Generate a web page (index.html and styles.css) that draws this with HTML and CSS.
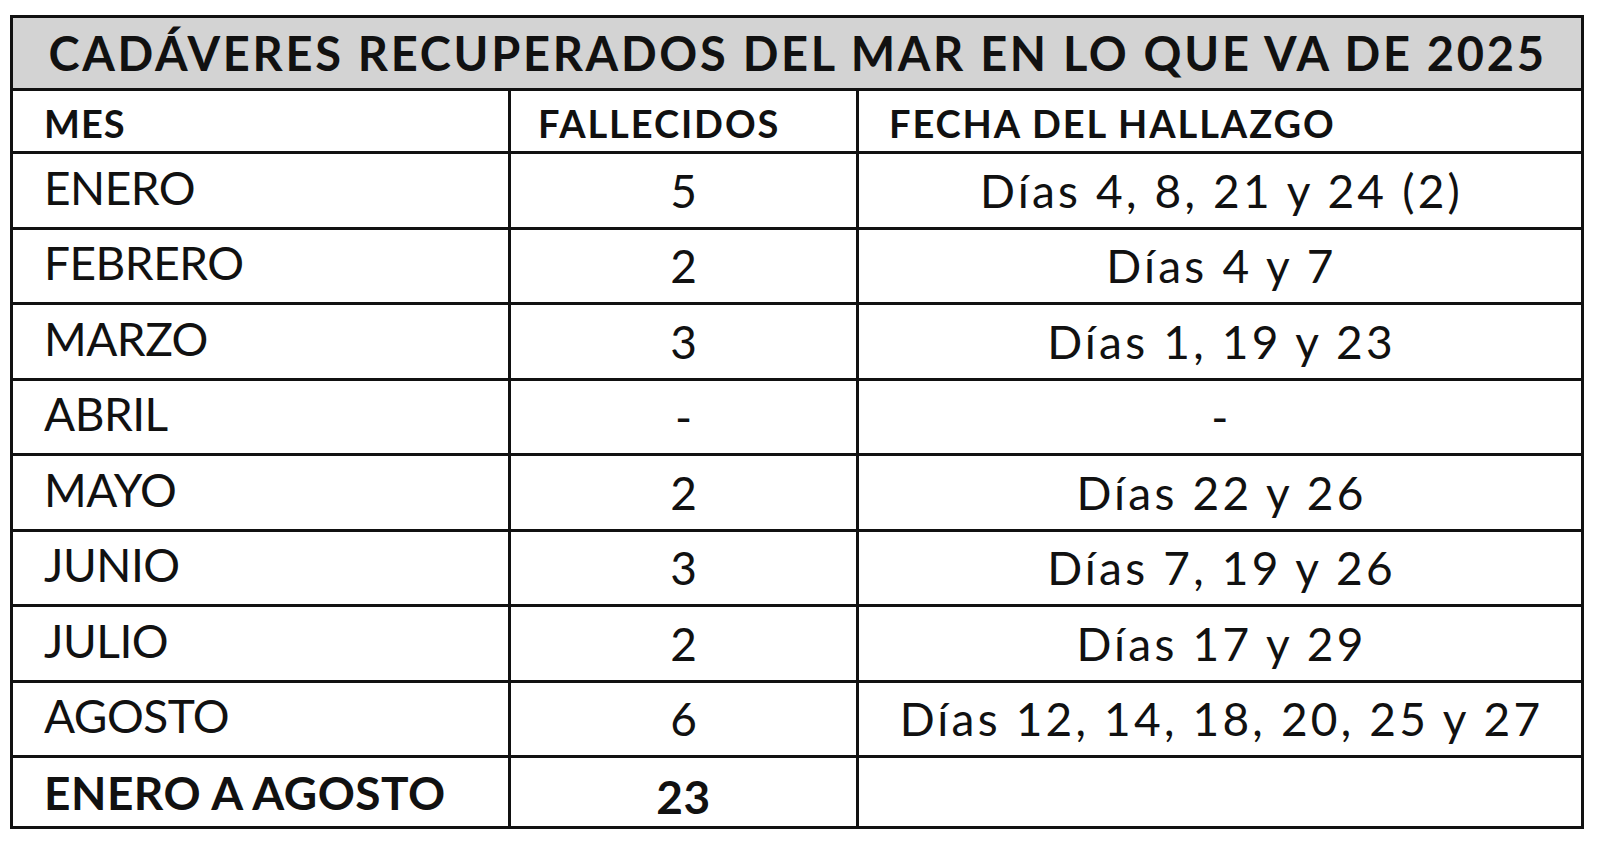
FILE: index.html
```html
<!DOCTYPE html>
<html lang="es">
<head>
<meta charset="utf-8">
<title>Cadáveres recuperados del mar en lo que va de 2025</title>
<link rel="stylesheet" href="styles.css">
</head>
<body>
<table class="sheet">
  <colgroup>
    <col class="c-mes">
    <col class="c-num">
    <col class="c-fecha">
  </colgroup>
  <thead>
    <tr class="title-row">
      <th colspan="3" class="title">CADÁVERES RECUPERADOS DEL MAR EN LO QUE VA DE 2025</th>
    </tr>
    <tr class="head-row">
      <th class="h h-mes">MES</th>
      <th class="h h-num">FALLECIDOS</th>
      <th class="h h-fecha">FECHA DEL HALLAZGO</th>
    </tr>
  </thead>
  <tbody>
    <tr class="row"><td class="mes">ENERO</td><td class="num">5</td><td class="fecha">Días 4, 8, 21 y 24 (2)</td></tr>
    <tr class="row"><td class="mes">FEBRERO</td><td class="num">2</td><td class="fecha">Días 4 y 7</td></tr>
    <tr class="row"><td class="mes">MARZO</td><td class="num">3</td><td class="fecha">Días 1, 19 y 23</td></tr>
    <tr class="row"><td class="mes">ABRIL</td><td class="num">-</td><td class="fecha">-</td></tr>
    <tr class="row"><td class="mes">MAYO</td><td class="num">2</td><td class="fecha">Días 22 y 26</td></tr>
    <tr class="row"><td class="mes">JUNIO</td><td class="num">3</td><td class="fecha">Días 7, 19 y 26</td></tr>
    <tr class="row"><td class="mes">JULIO</td><td class="num">2</td><td class="fecha">Días 17 y 29</td></tr>
    <tr class="row"><td class="mes">AGOSTO</td><td class="num">6</td><td class="fecha">Días 12, 14, 18, 20, 25 y 27</td></tr>
    <tr class="total-row"><td class="mes total">ENERO A AGOSTO</td><td class="num total total-num">23</td><td class="fecha"></td></tr>
  </tbody>
</table>
</body>
</html>
```

FILE: styles.css
```css
html, body {
  margin: 0;
  padding: 0;
  background: #ffffff;
}

body {
  font-family: Lato, "Open Sans", "Liberation Sans", sans-serif;
  color: #111111;
}

.sheet {
  margin: 15px 0 0 10px;
  width: 1571px;
  border-collapse: collapse;
  table-layout: fixed;
  border: 3px solid #111111;
}

.c-mes { width: 498px; }
.c-num { width: 348px; }
.c-fecha { width: 725px; }

.sheet > thead > tr > th,
.sheet > tbody > tr > td {
  border: 3px solid #111111;
  vertical-align: middle;
  white-space: nowrap;
}

.title-row { height: 73px; }

.sheet .title {
  background: #d3d3d3;
  font-weight: 700;
  font-size: 47px;
  letter-spacing: 2.7px;
  text-align: center;
  padding: 0 0 0 1px;
}

.head-row { height: 63px; }

.sheet .h {
  font-weight: 700;
  font-size: 38px;
  letter-spacing: 1.9px;
  text-align: left;
  padding: 4px 0 0 0;
}

.sheet .h-mes { padding-left: 31px; letter-spacing: 1px; }
.sheet .h-num { padding-left: 27px; }
.sheet .h-fecha { padding-left: 30px; }

.row { height: 75.5px; }
.total-row { height: 71px; }

.sheet .mes {
  font-size: 46px;
  letter-spacing: -0.5px;
  text-align: left;
  padding: 0 0 6px 31px;
}

.sheet .num,
.sheet .fecha {
  font-size: 46px;
  text-align: center;
  padding: 0;
}

.sheet .fecha {
  letter-spacing: 3.2px;
  padding-left: 3px;
}

.sheet .total {
  font-weight: 700;
  padding-bottom: 0;
  letter-spacing: 0.5px;
}

.sheet .total-num {
  padding-top: 8px;
}
```
